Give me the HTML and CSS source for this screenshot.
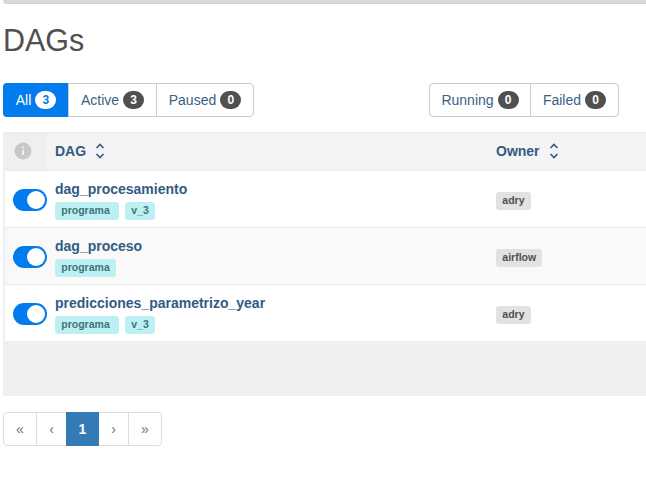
FILE: index.html
```html
<!DOCTYPE html>
<html lang="en">
<head>
<meta charset="utf-8">
<title>DAGs</title>
<link rel="stylesheet" href="styles.css">
</head>
<body>
<main class="page">
  <div class="panel-edge"></div>
  <h2>DAGs</h2>
  <div class="filters">
    <div class="btn-group">
      <a class="btn active w-all">All <span class="count">3</span></a>
      <a class="btn w-active">Active <span class="count">3</span></a>
      <a class="btn w-paused">Paused <span class="count">0</span></a>
    </div>
    <div class="btn-group">
      <a class="btn w-running">Running <span class="count">0</span></a>
      <a class="btn w-failed">Failed <span class="count">0</span></a>
    </div>
  </div>
  <div class="table">
    <div class="row head">
      <div class="cell info"><svg width="18" height="18" viewBox="0 0 18 18"><circle cx="9" cy="9" r="8.5" fill="#c8c8c8"/><path d="M8 4.5h2v2H8zM8 8h2v5H8z" fill="#efefef"/></svg></div>
      <div class="cell name">DAG <svg class="sort" width="10" height="16" viewBox="0 0 10 16"><path d="M1.5 5 5 1.5 8.5 5M1.5 11 5 14.5 8.5 11"/></svg></div>
      <div class="cell">Owner <svg class="sort" width="10" height="16" viewBox="0 0 10 16"><path d="M1.5 5 5 1.5 8.5 5M1.5 11 5 14.5 8.5 11"/></svg></div>
    </div>
    <div class="row">
      <div class="cell"><span class="switch"></span></div>
      <div class="cell name"><a class="dag">dag_procesamiento</a><div class="tags"><span class="tag spaced">programa</span><span class="tag">v_3</span></div></div>
      <div class="cell"><span class="tag owner">adry</span></div>
    </div>
    <div class="row alt">
      <div class="cell"><span class="switch"></span></div>
      <div class="cell name"><a class="dag">dag_proceso</a><div class="tags"><span class="tag">programa</span></div></div>
      <div class="cell"><span class="tag owner">airflow</span></div>
    </div>
    <div class="row last">
      <div class="cell"><span class="switch"></span></div>
      <div class="cell name"><a class="dag">predicciones_parametrizo_year</a><div class="tags"><span class="tag spaced">programa</span><span class="tag">v_3</span></div></div>
      <div class="cell"><span class="tag owner">adry</span></div>
    </div>
    <div class="foot"></div>
  </div>
  <nav class="pagination">
    <a class="edge">«</a><a class="step">‹</a><a class="current">1</a><a class="step">›</a><a class="edge">»</a>
  </nav>
</main>
</body>
</html>
```
FILE: styles.css
```css
* { box-sizing: border-box; }
body {
  margin: 0;
  background: #fff;
  color: #51504f;
  font: 14px/20px "Liberation Sans", Arial, sans-serif;
  overflow: hidden;
}
.page { padding-left: 3px; }
.panel-edge {
  height: 4px;
  background: #d9d9d9;
  border-bottom: 1px solid #d1d1d1;
  border-bottom-left-radius: 4px;
}
h2 {
  margin: 18px 0 25px;
  font-size: 30.5px;
  line-height: 36px;
  font-weight: 400;
}
.filters {
  display: flex;
  justify-content: space-between;
  width: 616px;
}
.btn-group { display: flex; }
.btn {
  display: flex;
  align-items: center;
  justify-content: center;
  gap: 4px;
  height: 34px;
  border: 1px solid #ccc;
  margin-left: -1px;
  color: #3a5f85;
  white-space: nowrap;
}
.btn:first-child { margin-left: 0; border-radius: 4px 0 0 4px; }
.btn:last-child { border-radius: 0 4px 4px 0; }
.w-all { width: 66px; }
.w-active { width: 89px; }
.w-paused { width: 98px; }
.w-running { width: 102px; }
.w-failed { width: 89px; }
.count {
  width: 21px;
  height: 18px;
  border-radius: 9px;
  background: #51504f;
  color: #fff;
  font-size: 12px;
  line-height: 18px;
  font-weight: 700;
  text-align: center;
}
.btn.active { background: #017cee; border-color: #017cee #ccc #017cee #017cee; color: #fff; }
.btn.active .count { background: #fff; color: #017cee; }
.table {
  margin-top: 15px;
  border-left: 2px solid #efefef;
}
.row {
  display: grid;
  grid-template-columns: 42px 441px 1fr;
  height: 57px;
  border-bottom: 1px solid #ececec;
}
.row.alt { background: #f9f9f9; }
.row.last { height: 56px; border-bottom: 0; }
.row.head {
  height: 39px;
  border-top: 1px solid #ececec;
  background: #f4f4f4;
  color: #325b83;
  font-weight: 700;
}
.cell {
  display: flex;
  align-items: center;
  padding-left: 8px;
}
.head .cell { gap: 9px; padding-bottom: 2px; }
.head .cell.info { background: #efefef; padding: 0 0 1px 9px; }
.sort { fill: none; stroke: #325b83; stroke-width: 1.6; }
.row:not(.head) .name {
  flex-direction: column;
  align-items: flex-start;
  justify-content: flex-start;
  padding-top: 8px;
}
.dag { color: #325b83; font-weight: 700; }
.tags { display: flex; gap: 6px; margin-top: 3px; }
.tag {
  height: 18px;
  padding: 0 6.3px;
  border-radius: 3px;
  background: #bdf0f3;
  color: #3d7478;
  font-size: 10.5px;
  line-height: 17px;
  font-weight: 700;
}
.tag.spaced { padding-right: 9.2px; }
.tag.owner { background: #e2e2e2; color: #51504f; margin-top: 3px; }
.switch {
  display: flex;
  justify-content: flex-end;
  width: 34px;
  height: 22px;
  margin-top: 1px;
  padding: 2px;
  border-radius: 11px;
  background: #017cee;
}
.switch::after {
  content: "";
  width: 18px;
  height: 18px;
  border-radius: 50%;
  background: #fff;
}
.foot { height: 55px; background: #efefef; }
.pagination { display: flex; margin-top: 16px; }
.pagination a {
  height: 34px;
  border: 1px solid #ddd;
  margin-left: -1px;
  color: #6f7378;
  line-height: 32px;
  text-align: center;
}
.pagination a:first-child { margin-left: 0; border-radius: 4px 0 0 4px; }
.pagination a:last-child { border-radius: 0 4px 4px 0; }
.pagination .edge { width: 34px; }
.pagination .step { width: 31px; }
.pagination .current {
  position: relative;
  width: 33px;
  border-color: #337ab7;
  background: #337ab7;
  color: #fff;
  font-weight: 700;
}
```
